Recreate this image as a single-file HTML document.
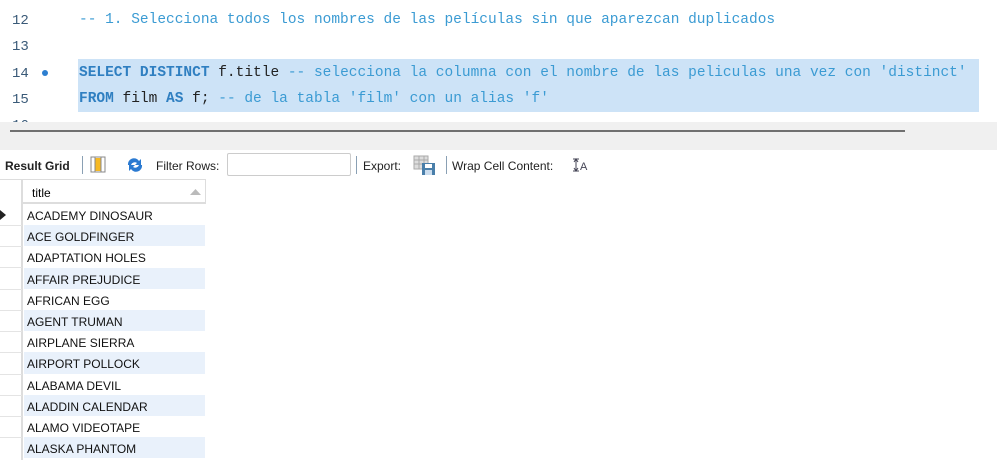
<!DOCTYPE html>
<html><head><meta charset="utf-8"><style>
*{margin:0;padding:0;box-sizing:border-box}
body{width:997px;height:460px;overflow:hidden;background:#fff;position:relative;font-family:"Liberation Sans",sans-serif}
.code{position:absolute;left:0;top:0;width:997px;height:122px;background:#fff;overflow:hidden}
.ln{position:absolute;left:12px;font-family:"Liberation Mono",monospace;font-size:14px;color:#3a5a78}
.cl{position:absolute;left:79px;font-family:"Liberation Mono",monospace;font-size:14.5px;white-space:pre;color:#222}
.hl{position:absolute;left:78px;top:59px;width:901px;height:53px;background:#cde3f7}
.k{color:#2f7fc1;font-weight:bold}.c{color:#3b9bd3}
.band{position:absolute;left:0;top:122px;width:997px;height:28px;background:#f0f0f0}
.sb{position:absolute;left:10px;top:130px;width:895px;height:2px;background:#707070}
.tb{position:absolute;top:150px;left:0;width:997px;height:29px;background:#fff;font-size:12px;color:#222}
.tb span{position:absolute;top:9px}
.sep{position:absolute;top:6px;width:1px;height:18px;background:#8aa0b4}
.inp{position:absolute;left:227px;top:3px;width:124px;height:23px;border:1px solid #ccc;border-radius:2px;background:#fff}
.grid{position:absolute;left:0;top:179px}
.hdr{position:absolute;top:0;left:23px;width:183px;height:25px;border-top:1px solid #ddd;border-bottom:2px solid #ddd;border-right:1px solid #ddd;font-size:12px;padding:6px 0 0 9px}
.rn{position:absolute;left:0;top:0;width:23px;height:281px;border-right:2px solid #ddd;border-top:1px solid #ddd}
.row{position:absolute;left:24px;width:181px;height:21.2px;font-size:12px;padding:5px 0 0 3px;color:#111}
.alt{background:#e9f1fb}
.rl{position:absolute;left:0;width:22px;height:1px;background:#e4e4e4}
</style></head><body>
<div class="code">
<div class="hl"></div>
<div class="ln" style="top:13px">12</div>
<div class="ln" style="top:39px">13</div>
<div class="ln" style="top:66px">14</div>
<div style="position:absolute;left:42px;top:70px;width:6px;height:6px;border-radius:50%;background:#2d7fd0"></div>
<div class="ln" style="top:92px">15</div>
<div class="ln" style="top:118px">16</div>
<div class="cl c" style="top:12px">-- 1. Selecciona todos los nombres de las películas sin que aparezcan duplicados</div>
<div class="cl" style="top:65px"><span class="k">SELECT DISTINCT</span> f.title <span class="c">-- selecciona la columna con el nombre de las peliculas una vez con 'distinct'</span></div>
<div class="cl" style="top:91px"><span class="k">FROM</span> film <span class="k">AS</span> f; <span class="c">-- de la tabla 'film' con un alias 'f'</span></div>
</div>
<div class="band"></div><div class="sb"></div>
<div class="tb">
<span style="left:5px;font-weight:bold">Result Grid</span>
<div class="sep" style="left:82px"></div>
<svg style="position:absolute;left:90px;top:6px" width="16" height="17"><rect x="1" y="1" width="14" height="15" fill="#fff" stroke="#888"/><rect x="5" y="2" width="6" height="13" fill="#f6b924"/><line x1="5" y1="1" x2="5" y2="16" stroke="#888"/><line x1="11" y1="1" x2="11" y2="16" stroke="#888"/></svg>
<svg style="position:absolute;left:125px;top:7px" width="20" height="16"><path d="M3 8 A6 6 0 0 1 14 4 L16 2 L16 8 L10 8 L12 6 A4 4 0 0 0 6 8Z" fill="#2b7ad1"/><path d="M17 8 A6 6 0 0 1 6 12 L4 14 L4 8 L10 8 L8 10 A4 4 0 0 0 14 8Z" fill="#2b7ad1"/></svg>
<span style="left:156px">Filter Rows:</span>
<div class="inp"></div>
<div class="sep" style="left:356px"></div>
<span style="left:363px">Export:</span>
<svg style="position:absolute;left:413px;top:5px" width="24" height="21"><rect x="1" y="1" width="14" height="13" fill="#ddd" stroke="#aaa"/><path d="M1 5H15M1 9H15M6 1V14M11 1V14" stroke="#aaa"/><rect x="9" y="8" width="13" height="12" fill="#4a7faa"/><rect x="12" y="9" width="7" height="4" fill="#fff"/><rect x="12" y="15" width="7" height="5" fill="#cde"/></svg>
<div class="sep" style="left:446px"></div>
<span style="left:452px">Wrap Cell Content:</span>
<svg style="position:absolute;left:572px;top:8px" width="16" height="14"><path d="M1 1H7M1 13H7M4 1V13M2 4L4 1L6 4M2 10L4 13L6 10" stroke="#445" fill="none"/><text x="8" y="12" font-size="11" fill="#445" font-family="Liberation Sans">A</text></svg>
</div>
<div class="grid">
<div class="rn"></div>
<div class="hdr">title<svg style="position:absolute;right:4px;top:9px" width="11" height="6"><path d="M0 6L5.5 0L11 6Z" fill="#bbb"/></svg></div>
<svg style="position:absolute;left:0;top:31px" width="7" height="10"><path d="M0 0L6 5L0 10Z" fill="#222"/></svg>
<div class="row" style="top:25px">ACADEMY DINOSAUR</div>
<div class="row alt" style="top:46.2px">ACE GOLDFINGER</div>
<div class="row" style="top:67.4px">ADAPTATION HOLES</div>
<div class="row alt" style="top:88.6px">AFFAIR PREJUDICE</div>
<div class="row" style="top:109.8px">AFRICAN EGG</div>
<div class="row alt" style="top:131px">AGENT TRUMAN</div>
<div class="row" style="top:152.2px">AIRPLANE SIERRA</div>
<div class="row alt" style="top:173.4px">AIRPORT POLLOCK</div>
<div class="row" style="top:194.6px">ALABAMA DEVIL</div>
<div class="row alt" style="top:215.8px">ALADDIN CALENDAR</div>
<div class="row" style="top:237px">ALAMO VIDEOTAPE</div>
<div class="row alt" style="top:258.2px">ALASKA PHANTOM</div>
<div class="rl" style="top:46px"></div><div class="rl" style="top:67px"></div><div class="rl" style="top:88px"></div><div class="rl" style="top:110px"></div><div class="rl" style="top:131px"></div><div class="rl" style="top:152px"></div><div class="rl" style="top:173px"></div><div class="rl" style="top:195px"></div><div class="rl" style="top:216px"></div><div class="rl" style="top:237px"></div><div class="rl" style="top:258px"></div>
</div>
</body></html>
